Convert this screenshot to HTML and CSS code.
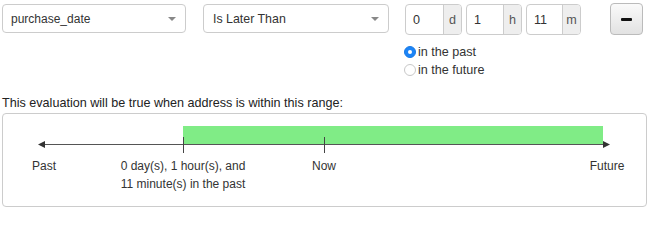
FILE: index.html
```html
<!DOCTYPE html>
<html>
<head>
<meta charset="utf-8">
<link rel="stylesheet" href="styles.css">
</head>
<body>
<div class="top">
  <div class="select sel-field"><span>purchase_date</span><span class="caret"></span></div>
  <div class="select sel-op"><span>Is Later Than</span><span class="caret"></span></div>
  <div class="time">
    <div class="inputs">
      <div class="ig ig-d"><span class="val">0</span><span class="addon">d</span></div>
      <div class="ig ig-h"><span class="val">1</span><span class="addon">h</span></div>
      <div class="ig ig-m"><span class="val">11</span><span class="addon">m</span></div>
    </div>
    <div class="radio"><span class="dot on"></span>in the past</div>
    <div class="radio"><span class="dot"></span>in the future</div>
  </div>
  <div class="btn"><span class="minus"></span></div>
</div>
<div class="caption">This evaluation will be true when address is within this range:</div>
<div class="box">
  <svg class="tl" width="643" height="92" viewBox="0 0 643 92">
    <rect x="180" y="12" width="420" height="18" fill="#80ec86"/>
    <line x1="40" y1="30.5" x2="601" y2="30.5" stroke="#555" stroke-width="1"/>
    <polygon points="35,30.5 42,27 42,34" fill="#333"/>
    <polygon points="607,30.5 600,27 600,34" fill="#333"/>
    <line x1="180.5" y1="23" x2="180.5" y2="39" stroke="#444" stroke-width="1"/>
    <line x1="321.5" y1="23" x2="321.5" y2="39" stroke="#444" stroke-width="1"/>
  </svg>
  <div class="lbl lbl-past">Past</div>
  <div class="lbl lbl-start">0 day(s), 1 hour(s), and<br>11 minute(s) in the past</div>
  <div class="lbl lbl-now">Now</div>
  <div class="lbl lbl-future">Future</div>
</div>
</body>
</html>
```
FILE: styles.css
```css
* { box-sizing: border-box; }
body {
  margin: 0;
  font-family: "Liberation Sans", Arial, sans-serif;
  font-size: 12.6px;
  color: #333;
  background: #fff;
  width: 650px;
  height: 209px;
  overflow: hidden;
}
.top {
  display: flex;
  align-items: flex-start;
  padding: 4px 0 0 2px;
  height: 96px;
}
.select {
  height: 29px;
  border: 1px solid #ccc;
  border-radius: 4px;
  display: flex;
  align-items: center;
  justify-content: space-between;
  padding: 0 9px 0 8px;
  color: #333;
  background: #fff;
  font-size: 12px;
}
.sel-field { width: 184px; }
.sel-op { width: 186px; margin-left: 17px; padding-left: 9px; font-size: 12.4px; }
.caret {
  width: 0; height: 0;
  border-left: 4px solid transparent;
  border-right: 4px solid transparent;
  border-top: 4px solid #888;
}
.time {
  margin-left: 16px;
  display: flex;
  flex-direction: column;
}
.inputs { display: flex; gap: 4px; }
.ig {
  height: 31px;
  border: 1px solid #ccc;
  border-radius: 4px;
  display: flex;
  overflow: hidden;
  background: #fff;
}
.ig-d { width: 57px; }
.ig-h { width: 56px; }
.ig-m { width: 55px; }
.val {
  flex: 1;
  display: flex;
  align-items: center;
  padding-left: 7px;
  color: #333;
}
.addon {
  width: 18px;
  background: #eee;
  border-left: 1px solid #ccc;
  display: flex;
  align-items: center;
  justify-content: center;
  color: #555;
}
.radio {
  display: flex;
  align-items: center;
  height: 18px;
  color: #333;
}
.radio:first-of-type { margin-top: 8px; }
.inputs + .radio { margin-top: 8px; }
.dot {
  width: 12px; height: 12px;
  border-radius: 50%;
  border: 1px solid #c8c8c8;
  background: #fff;
  margin: 0 2px 0 -1px;
  position: relative;
}
.dot.on {
  background: #1c84f6;
  border-color: #1a7be6;
}
.dot.on::after {
  content: "";
  position: absolute;
  left: 3px; top: 3px;
  width: 4px; height: 4px;
  border-radius: 50%;
  background: #fff;
}
.btn {
  margin-left: 29px;
  margin-top: -1px;
  width: 33px;
  height: 32px;
  border: 1px solid #bbb;
  border-radius: 4px;
  background: linear-gradient(#fafafa, #e2e2e2);
  display: flex;
  align-items: center;
  justify-content: center;
}
.minus {
  width: 11px;
  height: 3px;
  background: #111;
  border-radius: 1px;
}
.caption {
  padding-left: 2px;
  height: 14px;
  line-height: 14px;
  color: #222;
}
.box {
  position: relative;
  margin: 3px 0 0 2px;
  width: 645px;
  height: 94px;
  border: 1px solid #ccc;
  border-radius: 4px;
}
.tl { position: absolute; left: 0; top: 0; }
.lbl {
  position: absolute;
  top: 43px;
  line-height: 18px;
  font-size: 12px;
  text-align: center;
  white-space: nowrap;
  transform: translateX(-50%);
  color: #333;
}
.lbl-past { left: 41px; }
.lbl-start { left: 180px; }
.lbl-now { left: 321px; }
.lbl-future { left: 604px; }
```
